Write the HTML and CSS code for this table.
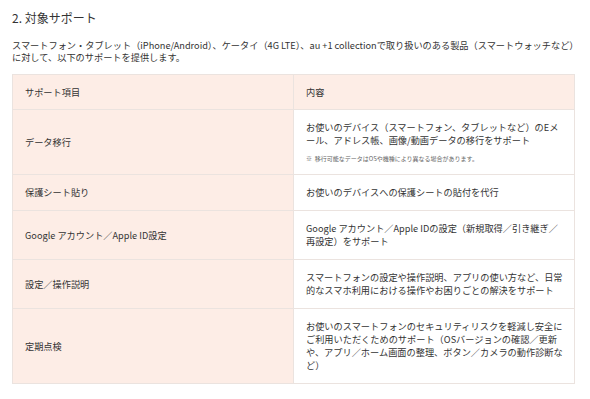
FILE: index.html
```html
<!DOCTYPE html>
<html lang="ja">
<head>
<meta charset="utf-8">
<title>対象サポート</title>
<link rel="stylesheet" href="styles.css">
</head>
<body>
<section class="wrap">
  <h2 class="title">2. 対象サポート</h2>
  <p class="lead">スマートフォン・タブレット（iPhone/Android）、ケータイ（4G LTE）、au +1 collectionで取り扱いのある製品（スマートウォッチなど）<br>に対して、以下のサポートを提供します。</p>
  <table class="support">
    <thead>
      <tr><th>サポート項目</th><th>内容</th></tr>
    </thead>
    <tbody>
      <tr>
        <th>データ移行</th>
        <td><div class="txt">お使いのデバイス（スマートフォン、タブレットなど）のEメ<br>ール、アドレス帳、画像/動画データの移行をサポート</div><div class="note">※&nbsp; 移行可能なデータはOSや機種により異なる場合があります。</div></td>
      </tr>
      <tr>
        <th>保護シート貼り</th>
        <td><div class="txt">お使いのデバイスへの保護シートの貼付を代行</div></td>
      </tr>
      <tr>
        <th>Google アカウント／Apple ID設定</th>
        <td><div class="txt">Google アカウント／Apple IDの設定（新規取得／引き継ぎ／<br>再設定）をサポート</div></td>
      </tr>
      <tr>
        <th>設定／操作説明</th>
        <td><div class="txt">スマートフォンの設定や操作説明、アプリの使い方など、日常<br>的なスマホ利用における操作やお困りごとの解決をサポート</div></td>
      </tr>
      <tr>
        <th>定期点検</th>
        <td><div class="txt">お使いのスマートフォンのセキュリティリスクを軽減し安全に<br>ご利用いただくためのサポート（OSバージョンの確認／更新<br>や、アプリ／ホーム画面の整理、ボタン／カメラの動作診断な<br>ど）</div></td>
      </tr>
    </tbody>
  </table>
</section>
</body>
</html>
```

FILE: styles.css
```css
html, body {
  margin: 0;
  padding: 0;
  background: #ffffff;
}
body {
  font-family: "Noto Sans CJK JP", "Noto Sans", sans-serif;
  color: #333333;
}
.wrap {
  padding: 10px 15px 0 12px;
}
.title {
  margin: 0;
  font-size: 12px;
  font-weight: 400;
  line-height: 16px;
}
.lead {
  margin: 12.5px 0 10.5px;
  font-size: 9.2px;
  line-height: 12.5px;
  white-space: nowrap;
}
.support {
  width: 100%;
  border-collapse: collapse;
  table-layout: fixed;
  font-size: 9.2px;
  line-height: 13px;
}
.support th,
.support td {
  border: 1px solid #ebe3df;
  padding: 11px 12px;
  text-align: left;
  vertical-align: middle;
  font-weight: 400;
}
.support th {
  background: #fdede6;
}
.support thead th {
  padding: 10.5px 12px;
}
.support td {
  background: #ffffff;
}
.txt {
  white-space: nowrap;
}
.note {
  margin-top: 8px;
  font-size: 6px;
  line-height: 8px;
  color: #666666;
  white-space: nowrap;
}
```
